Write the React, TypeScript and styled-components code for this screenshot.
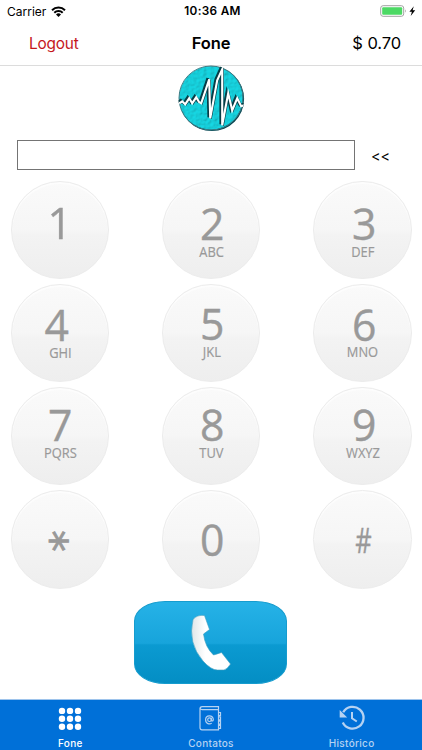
import React from 'react';
import styled, { createGlobalStyle } from 'styled-components';

const GlobalStyle = createGlobalStyle`
  * { box-sizing: border-box; }
  body { margin: 0; background: #fff; }
`;

const Screen = styled.div`
  width: 422px;
  height: 750px;
  display: flex;
  flex-direction: column;
  overflow: hidden;
  background: #fff;
  color: #000;
  font-family: Inter, 'Liberation Sans', sans-serif;
`;

const StatusBar = styled.header`
  height: 22px;
  flex: none;
  display: grid;
  grid-template-columns: 1fr auto 1fr;
  align-items: center;
  padding: 0 5px 0 7px;
  font-size: 12px;
`;

const Carrier = styled.div`
  display: flex;
  align-items: center;
  gap: 5px;
`;

const Clock = styled.div`
  font-weight: 600;
  font-size: 11.8px;
  letter-spacing: 0.3px;
  margin-left: 1px;
`;

const Power = styled.div`
  display: flex;
  justify-content: flex-end;
`;

const NavBar = styled.nav`
  height: 44px;
  flex: none;
  display: grid;
  grid-template-columns: 1fr auto 1fr;
  align-items: center;
  padding: 0 21px 2px;
  border-bottom: 1px solid #dcdcdc;
`;

const Logout = styled.button`
  justify-self: start;
  margin-left: 8px;
  padding: 1px 0 0;
  border: 0;
  background: none;
  color: #c5171c;
  font: 400 15.4px Inter, sans-serif;
  letter-spacing: -0.2px;
`;

const Title = styled.h1`
  margin: 0;
  font-size: 16.5px;
  font-weight: 600;
  letter-spacing: -0.1px;
`;

const Balance = styled.div`
  justify-self: end;
  font-size: 16.5px;
  letter-spacing: -0.1px;
`;

const LogoRow = styled.div`
  height: 74px;
  flex: none;
  display: flex;
  justify-content: center;
  align-items: flex-start;
  svg { margin: -2px 1px 0 0; }
`;

const NumberRow = styled.div`
  height: 30px;
  flex: none;
  display: flex;
  align-items: center;
  padding-left: 17px;
  gap: 16px;
`;

const NumberInput = styled.input`
  width: 338px;
  height: 30px;
  border: 1px solid #747474;
  background: #fff;
  border-radius: 0;
  outline: 0;
  font: 17px Inter, sans-serif;
`;

const Erase = styled.button`
  padding: 0;
  border: 0;
  background: none;
  color: #000;
  font: 400 14.5px Inter, sans-serif;
`;

const Keypad = styled.div`
  flex: none;
  margin-top: 10.5px;
  padding: 0 10.5px;
  display: grid;
  grid-template-columns: repeat(3, 98.5px);
  grid-auto-rows: 98.5px;
  justify-content: space-between;
  row-gap: 4.7px;
`;

const Key = styled.button<{ $top: number }>`
  display: flex;
  flex-direction: column;
  align-items: center;
  padding: ${(p) => p.$top}px 0 0;
  border: 1px solid #ececec;
  border-radius: 50%;
  background: linear-gradient(#fafafa 0%, #f6f6f6 50%, #f3f3f3 55%, #eeeeee 100%);
  box-shadow: inset 0 2px 1px #fdfdfd;
  color: #999;
  font-family: 'Open Sans', 'Noto Sans', sans-serif;
`;

const Digit = styled.span<{ $size: number; $shift: number; $scale: number }>`
  font-size: ${(p) => p.$size}px;
  line-height: 32px;
  transform: translateX(${(p) => p.$shift}px) scaleX(${(p) => p.$scale});
  -webkit-text-stroke: 0.4px #999;
`;

const Star = styled.span`
  width: 32px;
  height: 32px;
  font-family: 'DejaVu Sans', sans-serif;
  font-size: 43px;
  line-height: 50px;
  text-align: center;
  transform: translateX(1px) rotate(90deg);
  -webkit-text-stroke: 0.9px #999;
`;

const Letters = styled.span<{ $gap: number }>`
  margin-top: ${(p) => p.$gap}px;
  font-size: 14.8px;
  line-height: 11px;
  transform: translateX(0.5px) scaleX(0.87);
  -webkit-text-stroke: 0.2px #999;
`;

const CallRow = styled.div`
  flex: 1;
  display: flex;
  justify-content: center;
  align-items: flex-start;
  padding: 12px 1px 0 0;
`;

const CallButton = styled.button`
  width: 153px;
  height: 83px;
  padding: 0;
  border: 1px solid #169cce;
  border-radius: 31px / 20px;
  background: linear-gradient(#26b2e7 0%, #17a4db 51%, #0b9ad1 53%, #048ec4 100%);
  svg { display: block; }
`;

const TabBar = styled.footer`
  height: 51px;
  flex: none;
  display: grid;
  grid-template-columns: repeat(3, 1fr);
  border-top: 1px solid #9ec4ec;
  background: #0070d8;
`;

const Tab = styled.button<{ $active?: boolean }>`
  display: flex;
  flex-direction: column;
  align-items: center;
  gap: 4px;
  padding: 4px 0 0;
  border: 0;
  background: none;
  color: ${(p) => (p.$active ? '#fff' : '#b5d2f2')};
  font: 500 10px/14px Inter, sans-serif;
  letter-spacing: 0.3px;
`;

const WifiIcon = () => (
  <svg width="15" height="11" viewBox="0 0 15 11">
    <g fill="none" stroke="#000" strokeWidth="2">
      <path d="M1 4.2a9.3 9.3 0 0 1 13 0" />
      <path d="M3.3 6.7a6 6 0 0 1 8.4 0" />
    </g>
    <path d="M5 8.4a3.6 3.6 0 0 1 5 0L7.5 11z" />
  </svg>
);

const BatteryIcon = () => (
  <svg width="37" height="12" viewBox="0 0 37 12">
    <rect x=".7" y=".7" width="23" height="10.6" rx="2.4" fill="#fff" stroke="#a2a2a2" />
    <rect x="2.2" y="2.2" width="20" height="7.6" rx="1" fill="#4cd964" />
    <path d="M25 4.2q1.6 1.8 0 3.6z" fill="#999" />
    <path d="M33.8 1.2 29.4 6.7h2.5l-1.2 4.2 4.5-5.7h-2.6z" />
  </svg>
);

const wave = 'M2 39l3-2 3 3 4-6 3 5 4-6 3 5 2 1 8-24 1 39 7-38 5-11v56l6-32 4 17 5-12 4 8 3-1 3 3h4';

const Logo = () => (
  <svg width="68" height="68" viewBox="0 0 68 68">
    <defs>
      <clipPath id="disc"><circle cx="34.3" cy="34.3" r="33" /></clipPath>
      <filter id="grain" x="0" y="0" width="1" height="1">
        <feTurbulence type="fractalNoise" baseFrequency=".28" numOctaves="2" seed="4" result="n" />
        <feDiffuseLighting in="n" surfaceScale="1" diffuseConstant="1.08" lightingColor="#12d2de" result="l">
          <feDistantLight azimuth="225" elevation="62" />
        </feDiffuseLighting>
        <feComposite in="l" in2="SourceGraphic" operator="in" />
      </filter>
    </defs>
    <circle cx="34.8" cy="34.8" r="32.3" fill="#064550" />
    <circle cx="34" cy="34" r="31.7" fill="#19c9d5" filter="url(#grain)" />
    <circle cx="34" cy="34" r="32" fill="none" stroke="#3b7e87" strokeWidth="1" />
    <g fill="none" strokeLinejoin="miter" strokeMiterlimit="5" clipPath="url(#disc)">
      <path d={wave} stroke="#073d46" strokeWidth="2.6" transform="translate(-1.3 -.8)" />
      <path d={wave} stroke="#073d46" strokeWidth="1.2" transform="translate(1.2 .8)" />
      <path d={wave} stroke="#fff" strokeWidth="2.1" transform="translate(.2 .3)" />
    </g>
  </svg>
);

const HandsetIcon = () => (
  <svg width="151" height="81" viewBox="135 602 151 81">
    <defs>
      <linearGradient id="handset">
        <stop offset="0" stopColor="#dfe6e8" />
        <stop offset=".35" stopColor="#fff" />
      </linearGradient>
    </defs>
    <path
      d="M204.500 615.500Q197 614.500 193 619.500Q187.500 643 203 661Q211 670 217.500 670H224Q227 669.500 230.500 664L221.500 652.500Q217 654 213.500 655Q205 647 203.500 634L209.500 629.500Z"
      fill="url(#handset)" stroke="#3c9dc0" strokeWidth=".6"
    />
  </svg>
);

const DialIcon = () => (
  <svg width="26" height="28" viewBox="0 0 26 28" fill="currentColor">
    {[5.2, 13.1, 21].map((y) => [5, 13, 21].map((x) => <circle key={`${x}-${y}`} cx={x} cy={y + 1.7} r="3.2" />))}
  </svg>
);

const BookIcon = () => (
  <svg width="26" height="28" viewBox="0 0 26 28" fill="none" stroke="currentColor" strokeWidth="1.2">
    <path d="M2 5q0-2.400 2.200-2.400H20.500V5.600M4 5.600h16.500v20.200H4q-2 0-2-2V3.800q.2 1.800 2 1.800z" />
    <path d="M20.500 8.500h2v3h-2M20.500 12.800h2v3h-2M20.500 17.100h2v3h-2M20.500 21.400h2v3h-2" />
    <circle cx="11.500" cy="15.700" r="1.800" />
    <path d="M13.300 13.800v2.600q1.700 1.300 2-.8c0-5-7.700-5-7.700.2 0 4.200 4.200 4.800 6.100 3.300" />
  </svg>
);

const HistoryIcon = () => (
  <svg width="28" height="28" viewBox="0 0 28 28" fill="none" stroke="currentColor" strokeWidth="2.300">
    <path d="M5.200 8.300A10.900 10.900 0 1 1 4.800 18.400" />
    <path d="M1.700 6v7.500h7.500z" fill="currentColor" stroke="none" />
    <path d="M14 8v6.300l4.800 3.200" strokeWidth="2" />
  </svg>
);

interface KeyData {
  digit: string;
  letters?: string;
  top: number;
  gap?: number;
  size?: number;
  shift?: number;
  scale?: number;
}

const keys: KeyData[] = [
  { digit: '1', top: 24.5 },
  { digit: '2', letters: 'ABC', top: 25, shift: 1.5 },
  { digit: '3', letters: 'DEF', top: 25, shift: 1.5 },
  { digit: '4', letters: 'GHI', top: 23.5, gap: 7, shift: -3 },
  { digit: '5', letters: 'JKL', top: 22, shift: 1.5 },
  { digit: '6', letters: 'MNO', top: 23, gap: 6.5, shift: 1.5 },
  { digit: '7', letters: 'PQRS', top: 20, shift: 0.5 },
  { digit: '8', letters: 'TUV', top: 20, shift: 1.5 },
  { digit: '9', letters: 'WXYZ', top: 20, shift: 1.5 },
  { digit: '*', top: 34 },
  { digit: '0', top: 31.5, shift: 1.5 },
  { digit: '#', top: 33, size: 34, scale: 0.75, shift: 1.5 },
];

export default function App() {
  return (
    <Screen>
      <GlobalStyle />
      <StatusBar>
        <Carrier>Carrier <WifiIcon /></Carrier>
        <Clock>10:36 AM</Clock>
        <Power><BatteryIcon /></Power>
      </StatusBar>
      <NavBar>
        <Logout>Logout</Logout>
        <Title>Fone</Title>
        <Balance>$ 0.70</Balance>
      </NavBar>
      <LogoRow><Logo /></LogoRow>
      <NumberRow>
        <NumberInput type="tel" />
        <Erase>&lt;&lt;</Erase>
      </NumberRow>
      <Keypad>
        {keys.map((k) => (
          <Key key={k.digit} $top={k.top}>
            {k.digit === '*' ? (
              <Star>*</Star>
            ) : (
              <Digit $size={k.size ?? 44.5} $shift={k.shift ?? 0} $scale={k.scale ?? 0.96}>{k.digit}</Digit>
            )}
            {k.letters && <Letters $gap={k.gap ?? 7}>{k.letters}</Letters>}
          </Key>
        ))}
      </Keypad>
      <CallRow>
        <CallButton aria-label="Ligar"><HandsetIcon /></CallButton>
      </CallRow>
      <TabBar>
        <Tab $active><DialIcon />Fone</Tab>
        <Tab><BookIcon />Contatos</Tab>
        <Tab><HistoryIcon />Histórico</Tab>
      </TabBar>
    </Screen>
  );
}
